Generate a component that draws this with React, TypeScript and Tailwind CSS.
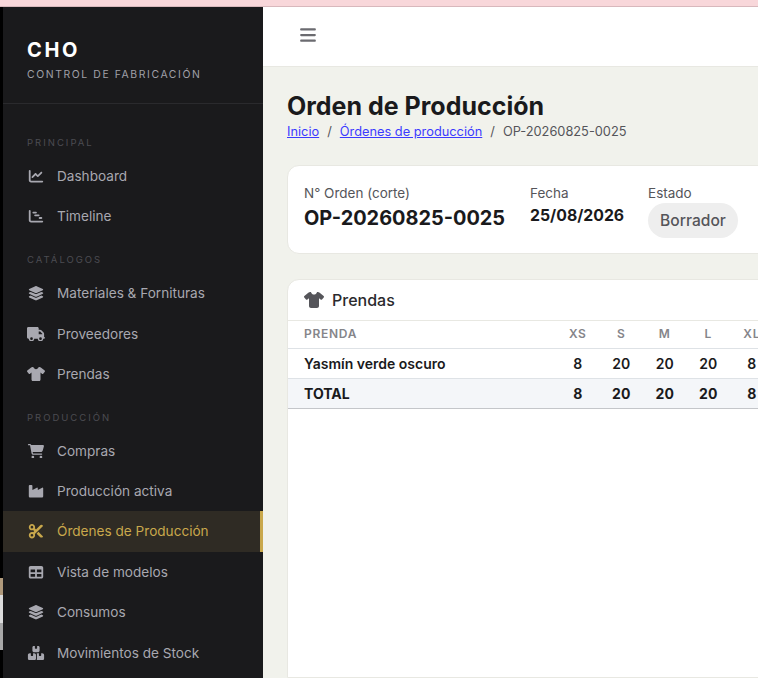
import React from 'react';
import type { IconType } from 'react-icons';
import {
  FaBars,
  FaBoxesStacked,
  FaCartShopping,
  FaChartGantt,
  FaChartLine,
  FaIndustry,
  FaLayerGroup,
  FaScissors,
  FaShirt,
  FaTable,
  FaTruck,
} from 'react-icons/fa6';

interface NavItem {
  label: string;
  icon: IconType;
  active?: boolean;
}

interface NavSection {
  title: string;
  items: NavItem[];
}

const sections: NavSection[] = [
  {
    title: 'PRINCIPAL',
    items: [
      { label: 'Dashboard', icon: FaChartLine },
      { label: 'Timeline', icon: FaChartGantt },
    ],
  },
  {
    title: 'CATÁLOGOS',
    items: [
      { label: 'Materiales & Fornituras', icon: FaLayerGroup },
      { label: 'Proveedores', icon: FaTruck },
      { label: 'Prendas', icon: FaShirt },
    ],
  },
  {
    title: 'PRODUCCIÓN',
    items: [
      { label: 'Compras', icon: FaCartShopping },
      { label: 'Producción activa', icon: FaIndustry },
      { label: 'Órdenes de Producción', icon: FaScissors, active: true },
      { label: 'Vista de modelos', icon: FaTable },
      { label: 'Consumos', icon: FaLayerGroup },
      { label: 'Movimientos de Stock', icon: FaBoxesStacked },
    ],
  },
];

const sizes = ['XS', 'S', 'M', 'L', 'XL'];
const quantities = [8, 20, 20, 20, 8];

const Sidebar = () => (
  <aside className="w-[260px] shrink-0 bg-[#1a1a1c] flex flex-col">
    <div className="h-[97px] shrink-0 border-b border-[#2a2a2d] pl-6 pt-[31px]">
      <div className="text-[20px] leading-[24px] font-bold tracking-[2.6px] text-white">CHO</div>
      <div className="mt-[5px] text-[10.4px] leading-[15px] tracking-[1.6px] text-[#a0a0a8]">CONTROL DE FABRICACIÓN</div>
    </div>
    <nav className="flex flex-col pt-[31px]">
      {sections.map((section) => (
        <div key={section.title} className="flex flex-col mb-[15.2px]">
          <div className="pl-6 h-[16px] mb-[5.1px] text-[9.5px] leading-[16px] tracking-[2px] text-[#4c4c52]">{section.title}</div>
          {section.items.map((item) => (
            <div
              key={item.label}
              className={
                item.active
                  ? 'h-[40.4px] flex items-center pl-6 gap-3 text-[13.6px] bg-[#2f2b24] text-[#c9a84c] border-r-[3px] border-[#c9a84c]'
                  : 'h-[40.4px] flex items-center pl-6 gap-3 text-[13.6px] text-[#a8a8b0]'
              }
            >
              <item.icon className="w-[18px] h-[14.4px] shrink-0" />
              <span>{item.label}</span>
            </div>
          ))}
        </div>
      ))}
    </nav>
  </aside>
);

const OrderCard = () => (
  <div className="flex h-[89px] bg-white rounded-xl border border-[#e8e8e2] px-4 pt-[17px] gap-[25px]">
    <div>
      <div className="text-[13.5px] leading-[20px] text-[#55555a]">N° Orden (corte)</div>
      <div className="text-[19.9px] leading-[31px] font-bold text-[#1a1a1c]">OP-20260825-0025</div>
    </div>
    <div className="w-[93px]">
      <div className="text-[13.5px] leading-[20px] text-[#55555a]">Fecha</div>
      <div className="text-[15.8px] leading-[25px] font-bold text-[#1a1a1c] whitespace-nowrap">25/08/2026</div>
    </div>
    <div>
      <div className="text-[13.5px] leading-[20px] text-[#55555a]">Estado</div>
      <span className="block rounded-full bg-[#eeeeee] px-3 h-[35px] leading-[35px] text-[15.6px] font-medium text-[#55555a]">Borrador</span>
    </div>
  </div>
);

const GarmentsCard = () => (
  <div className="mt-[25px] bg-white rounded-t-xl border border-[#e8e8e2] flex-1">
    <div className="h-[41px] flex items-center gap-2 px-4 border-b border-[#e8e8e2]">
      <FaShirt className="w-5 h-4 text-[#55555a]" />
      <span className="text-[16px] font-medium text-[#2a2a2d]">Prendas</span>
    </div>
    <table className="border-collapse text-[14px]">
      <thead>
        <tr className="h-[27px] border-b border-[#dee2e6]">
          <th className="w-[268px] pl-4 text-left text-[12px] font-semibold tracking-[0.7px] text-[#85858a]">PRENDA</th>
          {sizes.map((s) => (
            <th key={s} className="w-[43.5px] text-center text-[12px] font-semibold tracking-[0.7px] text-[#85858a]">{s}</th>
          ))}
        </tr>
      </thead>
      <tbody>
        <tr className="h-[30px] border-b border-[#dee2e6]">
          <td className="pl-4 font-semibold text-[#1a1a1c]">Yasmín verde oscuro</td>
          {quantities.map((q, i) => (
            <td key={i} className="text-center font-semibold text-[#1a1a1c]">{q}</td>
          ))}
        </tr>
        <tr className="h-[30px] bg-[#f4f6f9] border-b border-[#c4c6ca]">
          <td className="pl-4 font-bold text-[#1a1a1c]">TOTAL</td>
          {quantities.map((q, i) => (
            <td key={i} className="text-center font-bold text-[#1a1a1c]">{q}</td>
          ))}
        </tr>
      </tbody>
    </table>
  </div>
);

export default function App() {
  return (
    <div className="w-[758px] h-[678px] overflow-hidden flex flex-col bg-black font-['Inter',sans-serif]">
      <div className="h-[7px] shrink-0 bg-[#f8d7da] border-b border-[#d8b8bc]" />
      <div className="flex flex-1 min-h-0">
        {/* sliver of the window behind, at the left edge */}
        <div className="w-[3px] shrink-0 bg-black flex flex-col pt-[571px]">
          <div className="h-[17px] bg-[#b09a7c]" />
          <div className="h-[28px] bg-[#dcdcdc]" />
          <div className="h-[27px] bg-[#a8a8a8]" />
        </div>
        <Sidebar />
        <main className="w-[900px] shrink-0 flex flex-col bg-[#f1f2ec]">
          <header className="h-[60px] shrink-0 bg-white border-b border-[#e8e8e2] flex items-center pl-[36px] pb-[3px]">
            <FaBars className="w-[18px] h-[18px] text-[#6b6b70]" />
          </header>
          <div className="flex-1 flex flex-col px-6 pt-[24px] min-h-0">
            <h1 className="text-[25px] leading-[30px] font-bold text-[#1a1a1c]">Orden de Producción</h1>
            <div className="flex items-center gap-2 text-[12.8px] leading-[21px] text-[#55555a] mb-[23px]">
              <a href="#" className="text-[#3b3bff] underline">Inicio</a>
              <span>/</span>
              <a href="#" className="text-[#3b3bff] underline">Órdenes de producción</a>
              <span>/</span>
              <span>OP-20260825-0025</span>
            </div>
            <OrderCard />
            <GarmentsCard />
          </div>
        </main>
      </div>
    </div>
  );
}
